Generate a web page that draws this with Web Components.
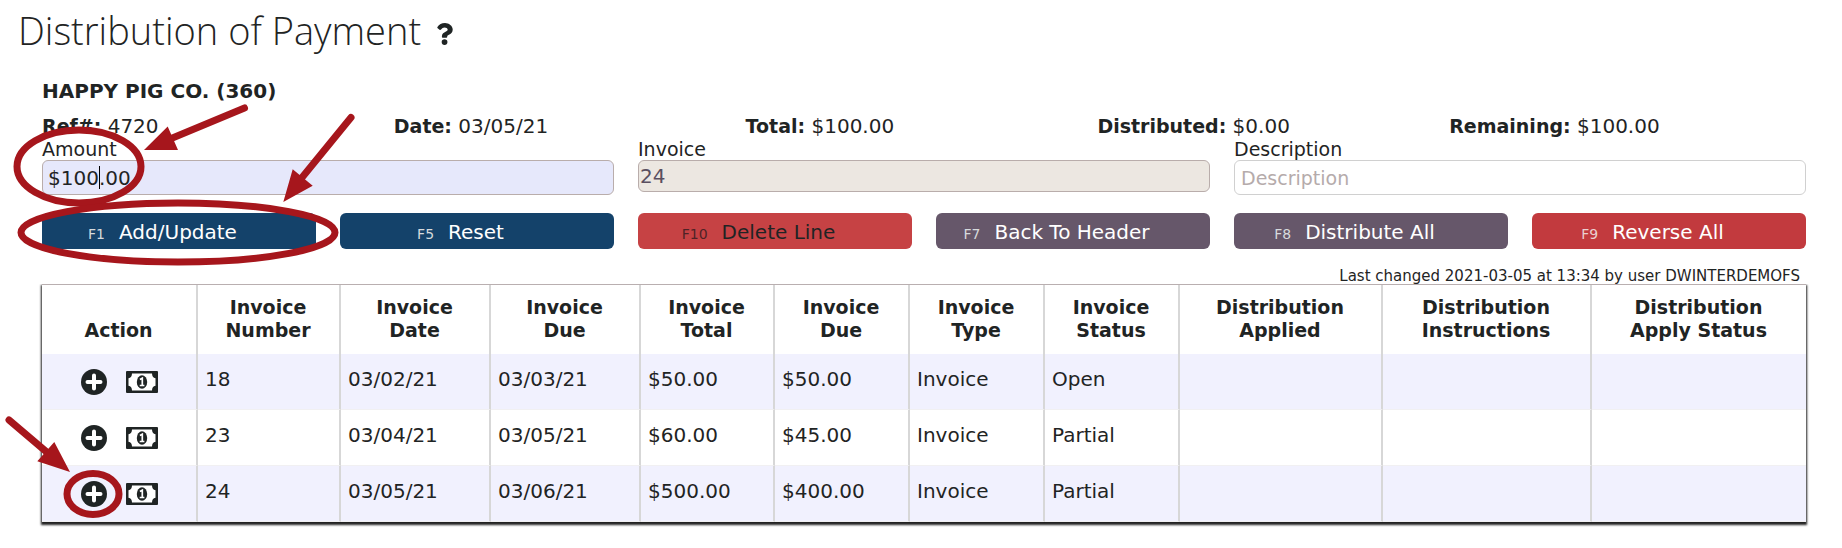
<!DOCTYPE html>
<html lang="en">
<head>
<meta charset="utf-8">
<title>Distribution of Payment</title>
<style>
  body { margin: 0; background: #fff; color: #1f2424; font: 19px/22px "DejaVu Sans", Verdana, sans-serif; }
</style>
</head>
<body>
<payment-page></payment-page>

<script>
const define = (name, html, setup) => {
  const template = document.createElement('template');
  template.innerHTML = html;
  customElements.define(name, class extends HTMLElement {
    connectedCallback() {
      if (this.shadowRoot) return;
      this.attachShadow({ mode: 'open' }).append(template.content.cloneNode(true));
      if (setup) setup(this, this.shadowRoot);
    }
  });
};

/* Labelled amount in the summary strip */
define('summary-item', `
  <style>:host { display: block; font-size: 20px; line-height: 24px; } b { font-size: 19px; font-weight: 700; }</style>
  <b><slot name="label"></slot></b> <slot></slot>`);

/* Labelled text box */
define('form-field', `
  <style>
    :host { display: block; }
    label { display: block; }
    .box { position: relative; display: flex; }
    input { box-sizing: border-box; flex: 1; min-width: 0; height: 35px; margin: 0; padding: 0 6px;
      border: 1px solid #d0d0d0; border-radius: 6px; background: #fff; color: inherit; font: inherit; font-size: 20px; outline: 0; }
    input::placeholder { color: #b5abab; opacity: 1; font-size: 19px; }
    :host([active]) input { padding: 0 5px; background: #e6e8fb; border-color: #b9adab; caret-color: transparent; }
    :host([locked]) input { height: 32px; padding: 0 1px; background: #ece7e1; border-color: #b9adab; color: #5a4f60; }
    .caret { display: none; position: absolute; left: 57px; top: 6px; width: 1px; height: 23px; background: #000; }
    :host([active]) .caret { display: block; }
  </style>
  <label for="control"></label>
  <div class="box"><input id="control" type="text"><span class="caret"></span></div>`,
  (host, root) => {
    root.querySelector('label').textContent = host.getAttribute('label');
    const input = root.querySelector('input');
    input.value = host.getAttribute('value') || '';
    input.placeholder = host.getAttribute('placeholder') || '';
    input.readOnly = host.hasAttribute('locked');
  });

/* Function-key button */
define('key-button', `
  <style>
    :host { display: block; --fill: #14426a; --ink: #fff; --key: #d6dadd; }
    :host([tone="plain"]) { --fill: #66576a; }
    :host([tone="delete"]) { --fill: #c64244; --ink: #1f2424; --key: #4e2226; }
    :host([tone="reverse"]) { --fill: #c23a3e; --key: #ead0d0; }
    button { display: flex; justify-content: center; align-items: baseline; gap: 14px; width: 100%; height: 36px;
      margin: 0; padding: 7px 33px 0 0; border: 0; border-radius: 6px; background: var(--fill); color: var(--ink);
      font: inherit; font-size: 20px; line-height: 24px; white-space: nowrap; cursor: pointer; }
    small { font-size: 14px; color: var(--key); }
  </style>
  <button type="button"><small><slot name="key"></slot></small><span><slot></slot></span></button>`);

define('icon-add', `
  <style>:host { display: block; } svg { display: block; width: 26px; height: 26px; }</style>
  <svg viewBox="0 0 26 26" aria-hidden="true">
    <circle cx="13" cy="13" r="13" fill="#1f2424"/>
    <path d="M13 6.5v13M6.5 13h13" stroke="#fff" stroke-width="4" stroke-linecap="round"/>
  </svg>`);

define('icon-bill', `
  <style>:host { display: block; } svg { display: block; width: 32px; height: 22px; }</style>
  <svg viewBox="0 0 32 22" aria-hidden="true">
    <rect width="32" height="22" rx="1" fill="#1f2424"/>
    <path d="M6 2.500h20c0 2.400 1.200 4.500 3.500 4.800v7.400c-2.300.3-3.500 2.400-3.500 4.800H6c0-2.400-1.200-4.500-3.500-4.800V7.300C4.800 7 6 4.900 6 2.500z" fill="#fff"/>
    <ellipse cx="16" cy="11" rx="5.200" ry="6.800" fill="#1f2424"/>
    <path d="M13.900 8.600l2.400-1.300v7M13.700 14.500h4.700" fill="none" stroke="#fff" stroke-width="1.700"/>
  </svg>`);

/* Invoice table */
define('invoice-table', `
  <style>
    :host { display: block; }
    table { width: 100%; table-layout: fixed; border-collapse: separate; border-spacing: 0; background: #fff;
      border-top: 1px solid #b9afb0; box-shadow: 0 2px 2px 1px #222; clip-path: inset(0 -6px -8px -6px); }
    th, td { padding: 13px 7px 0; border-right: 2px solid #d7d7d7; text-align: left; vertical-align: top; font-weight: 400; }
    th { height: 57px; padding: 0 7px 12px 6px; text-align: center; vertical-align: bottom; font-weight: 700; line-height: 23px; }
    th:last-child, td:last-child { border-right: 0; }
    td { height: 42px; border-bottom: 1px solid #f1f0f2; font-size: 20px; line-height: 24px; }
    tbody tr:nth-child(odd) td { background: #f1f1fe; }
    td:first-child { height: 40px; padding: 15px 0 0; }
    .actions { display: flex; justify-content: center; align-items: center; gap: 19px; }
    button { margin: 0; padding: 0; border: 0; background: none; cursor: pointer; }
  </style>
  <table>
    <colgroup></colgroup>
    <thead><tr></tr></thead>
    <tbody></tbody>
  </table>`,
  (host, root) => {
    const columns = [['Action', 156], ['Invoice Number', 143], ['Invoice Date', 150], ['Invoice Due', 150],
      ['Invoice Total', 134], ['Invoice Due', 135], ['Invoice Type', 135], ['Invoice Status', 135],
      ['Distribution Applied', 203], ['Distribution Instructions', 209], ['Distribution Apply Status', 214]];
    const rows = [
      ['18', '03/02/21', '03/03/21', '$50.00', '$50.00', 'Invoice', 'Open', '', '', ''],
      ['23', '03/04/21', '03/05/21', '$60.00', '$45.00', 'Invoice', 'Partial', '', '', ''],
      ['24', '03/05/21', '03/06/21', '$500.00', '$400.00', 'Invoice', 'Partial', '', '', '']];
    root.querySelector('colgroup').innerHTML = columns.map(c => `<col style="width:${c[1]}px">`).join('');
    root.querySelector('thead tr').innerHTML = columns.map(c => `<th scope="col">${c[0].replace(' ', '<br>')}</th>`).join('');
    root.querySelector('tbody').innerHTML = rows.map(r => `<tr><td><div class="actions">
      <button type="button" aria-label="Add invoice ${r[0]}"><icon-add></icon-add></button>
      <button type="button" aria-label="Pay invoice ${r[0]}"><icon-bill></icon-bill></button></div></td>
      ${r.map(v => `<td>${v}</td>`).join('')}</tr>`).join('');
  });

/* Red call-outs drawn over the page */
define('callout-layer', `
  <style>
    :host { position: absolute; left: 0; top: 0; pointer-events: none; }
    svg { display: block; width: 360px; height: 530px; }
  </style>
  <svg viewBox="0 0 360 530" aria-hidden="true">
    <g fill="none" stroke="#a6161c" stroke-width="7" stroke-linecap="round">
      <ellipse cx="79" cy="166.500" rx="62" ry="36.500"/>
      <ellipse cx="178" cy="232.500" rx="157" ry="29.500"/>
      <ellipse cx="93" cy="494" rx="26" ry="20.500"/>
      <path d="M244.500 108L170 139M351 117.500L300 180M9 420l40 34"/>
    </g>
    <path fill="#a6161c" d="M144 150l23.700-23.500L178 150zM283.300 202l9.400-32.700 20 16.400zM70 472l-32.700-10.700 17-19.300z"/>
  </svg>`);

define('payment-page', `
  <style>
    :host { display: block; position: relative; padding: 5px 36px 24px 18px; }
    h1 { display: flex; align-items: center; gap: 16px; margin: 0; font: 300 38px/50px "Open Sans", "Noto Sans", sans-serif; }
    h1 a { color: inherit; }
    h1 svg { display: block; width: 16px; height: 22px; margin-top: 8px; }
    main { padding: 24px 0 0 24px; }
    h2 { margin: 0 0 11px; font-size: 20px; line-height: 24px; }
    .summary { display: grid; grid-template-columns: repeat(5, 1fr); padding-right: 5px; }
    .fields { display: grid; grid-template-columns: repeat(3, 1fr); gap: 24px; align-items: start; }
    .buttons { display: grid; grid-template-columns: repeat(6, 1fr); gap: 24px; margin-top: 18px; }
    .changed { margin: 19px 6px 0 0; font-size: 15px; line-height: 16px; text-align: right; }
  </style>
  <h1>Distribution of Payment
    <a href="#help" aria-label="Help"><svg viewBox="20 0 364 512" preserveAspectRatio="none" fill="currentColor"><path d="M202 0C122.200 0 70.500 32.700 29.900 91c-7.400 10.600-5.100 25.100 5.200 32.900l43.100 32.700c10.400 7.900 25.100 6 33.300-4.100 25-31.400 43.600-49.500 82.700-49.500 30.800 0 68.800 19.800 68.800 49.600 0 22.600-18.600 34.100-49 51.200-35.400 19.900-82.300 44.600-82.300 106.400V320c0 13.300 10.700 24 24 24h72.500c13.300 0 24-10.700 24-24v-5.800c0-42.900 125.300-44.600 125.300-160.600C377.500 66.300 286.900 0 202 0zM192 378c-40 0-66 20-66 67s26 67 66 67 66-20 66-67-26-67-66-67z"/></svg></a>
  </h1>
  <main>
    <h2>HAPPY PIG CO. (360)</h2>
    <div class="summary">
      <summary-item><span slot="label">Ref#:</span>4720</summary-item>
      <summary-item><span slot="label">Date:</span>03/05/21</summary-item>
      <summary-item><span slot="label">Total:</span>$100.00</summary-item>
      <summary-item><span slot="label">Distributed:</span>$0.00</summary-item>
      <summary-item><span slot="label">Remaining:</span>$100.00</summary-item>
    </div>
    <div class="fields">
      <form-field label="Amount" value="$100.00" active></form-field>
      <form-field label="Invoice" value="24" locked></form-field>
      <form-field label="Description" placeholder="Description"></form-field>
    </div>
    <div class="buttons">
      <key-button><span slot="key">F1</span>Add/Update</key-button>
      <key-button><span slot="key">F5</span>Reset</key-button>
      <key-button tone="delete"><span slot="key">F10</span>Delete Line</key-button>
      <key-button tone="plain"><span slot="key">F7</span>Back To Header</key-button>
      <key-button tone="plain"><span slot="key">F8</span>Distribute All</key-button>
      <key-button tone="reverse"><span slot="key">F9</span>Reverse All</key-button>
    </div>
    <p class="changed">Last changed 2021-03-05 at 13:34 by user DWINTERDEMOFS</p>
    <invoice-table></invoice-table>
  </main>
  <callout-layer></callout-layer>`);
</script>
</body>
</html>
